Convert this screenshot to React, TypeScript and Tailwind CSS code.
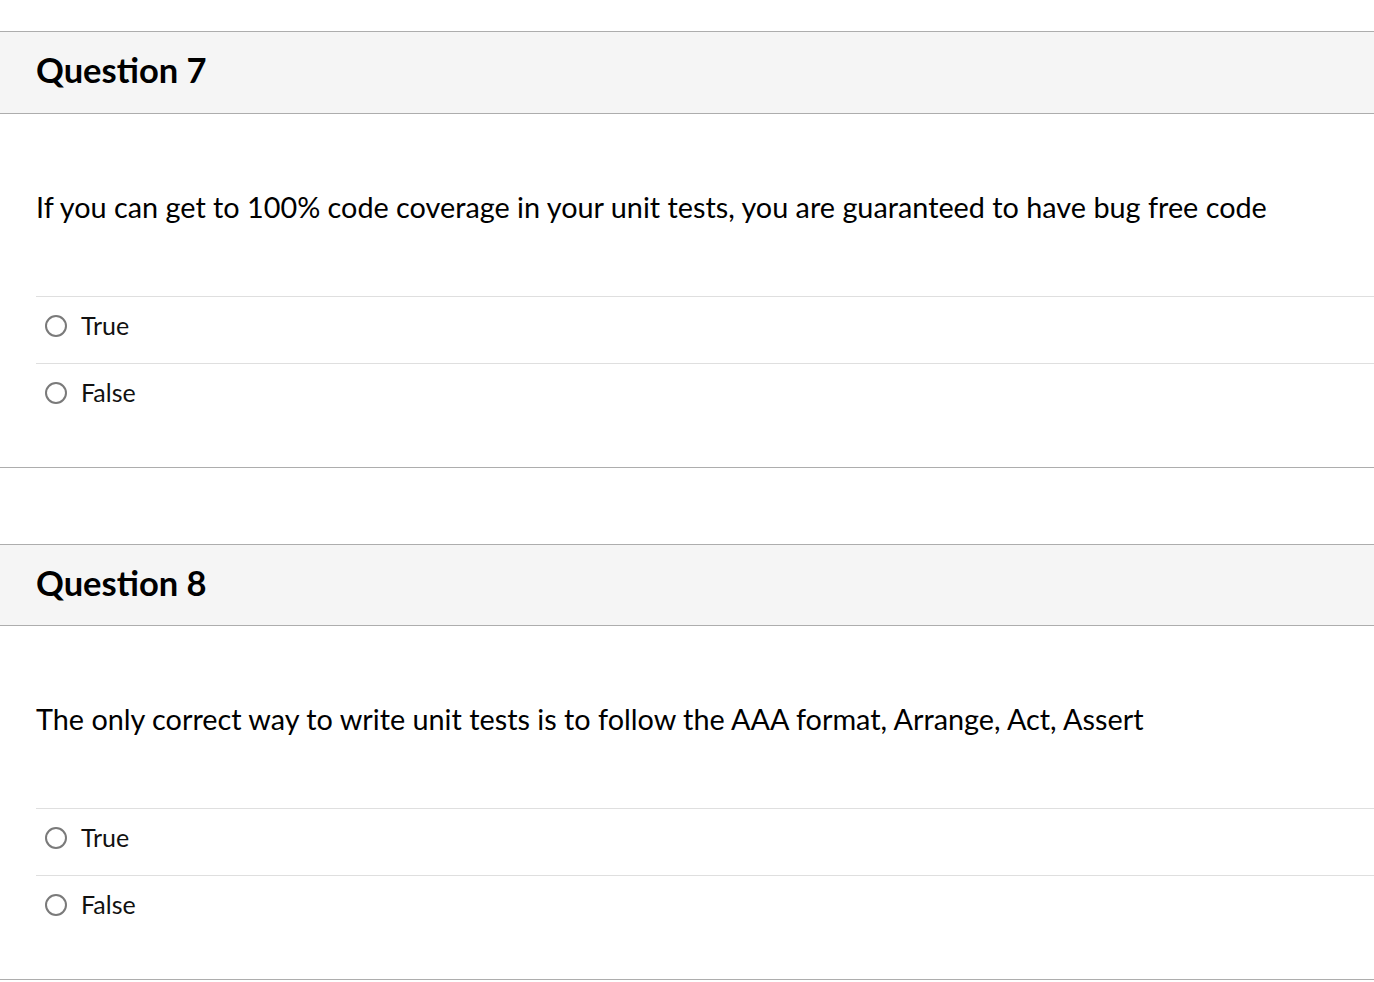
const questions = [
  {
    id: 7,
    text: "If you can get to 100% code coverage in your unit tests, you are guaranteed to have bug free code",
  },
  {
    id: 8,
    text: "The only correct way to write unit tests is to follow the AAA format, Arrange, Act, Assert",
  },
];

function Answer({ label }: { label: string }) {
  return (
    <label className="flex h-[67px] items-center border-t border-[#dfdfdf] pb-[8px] pl-[9px]">
      <span className="h-[22px] w-[22px] rounded-full border-2 border-[#7a7a7a] bg-white" />
      <span className="ml-[14px] pb-[2px] text-[25px] leading-none text-[#111]">{label}</span>
    </label>
  );
}

export default function App() {
  return (
    <div
      className="min-h-screen w-full bg-white pt-[31px] text-black"
      style={{ fontFamily: "Lato, 'Open Sans', sans-serif" }}
    >
      {questions.map((q, i) => (
        <div
          key={q.id}
          className={`border-y border-[#adadad] ${i > 0 ? "mt-[76px]" : ""}`}
        >
          <div
            className={`flex items-center border-b border-[#adadad] bg-[#f5f5f5] px-[36px] pb-[4px] ${
              i > 0 ? "h-[81px]" : "h-[82px]"
            }`}
          >
            <h2 className="text-[34.5px] font-bold leading-none">Question {q.id}</h2>
          </div>
          <div className="pb-[37px] pl-[36px] pt-[72px]">
            <p className="text-[28.8px] leading-[42px]">{q.text}</p>
            <div className="mt-[68px]">
              <Answer label="True" />
              <Answer label="False" />
            </div>
          </div>
        </div>
      ))}
    </div>
  );
}
